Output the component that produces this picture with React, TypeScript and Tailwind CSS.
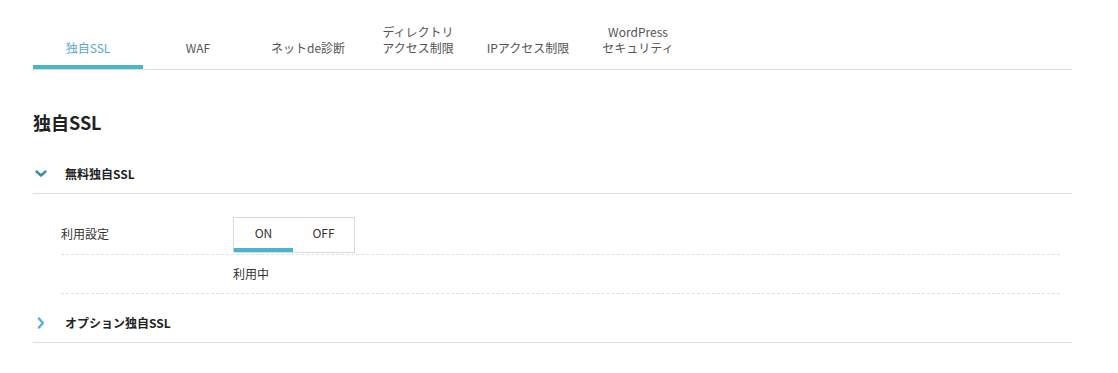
import React from "react";

const font = { fontFamily: '"Noto Sans CJK JP", "Noto Sans", sans-serif' };

const tabs: { lines: string[]; active?: boolean }[] = [
  { lines: ["独自SSL"], active: true },
  { lines: ["WAF"] },
  { lines: ["ネットde診断"] },
  { lines: ["ディレクトリ", "アクセス制限"] },
  { lines: ["IPアクセス制限"] },
  { lines: ["WordPress", "セキュリティ"] },
];

function ChevronDown() {
  return (
    <svg width="12" height="8" viewBox="0 0 12 8" className="block">
      <path d="M1.5 1.5 L6 5.5 L10.5 1.5" fill="none" stroke="#3f8aa6" strokeWidth="2.4" strokeLinecap="round" strokeLinejoin="round" />
    </svg>
  );
}

function ChevronRight() {
  return (
    <svg width="8" height="12" viewBox="0 0 8 12" className="block">
      <path d="M2 1.5 L5.8 6 L2 10.5" fill="none" stroke="#4fb1d3" strokeWidth="2.4" strokeLinecap="round" strokeLinejoin="round" />
    </svg>
  );
}

export default function App() {
  return (
    <div className="min-h-[373px] bg-white text-[#333]" style={font}>
      <div className="ml-[33px] w-[1039px]">
        {/* Tabs */}
        <div className="flex h-[70px] border-b border-[#dcdcdc]">
          {tabs.map((t, i) => (
            <div key={i} className="flex h-[69px] w-[110px] flex-col justify-end">
              <div className={`pb-[9px] text-center text-[12px] leading-[16px] ${t.active ? "text-[#5aa8c6]" : "text-[#555]"}`}>
                {t.lines.map((l, j) => (
                  <div key={j}>{l}</div>
                ))}
              </div>
              <div className={`h-[4px] ${t.active ? "bg-[#48b4cf]" : ""}`} />
            </div>
          ))}
        </div>

        {/* Title */}
        <h1 className="mt-[39px] text-[18px] font-bold leading-[27px] text-[#222]">独自SSL</h1>

        {/* Accordion 1 */}
        <div className="mt-[18px] flex h-[40px] items-center border-b border-[#dcdcdc]">
          <div className="ml-[2px] flex w-[30px] items-center">
            <ChevronDown />
          </div>
          <span className="text-[12px] font-bold text-[#222]">無料独自SSL</span>
        </div>

        <div className="ml-[28px] mr-[12px]">
          <div className="flex border-b border-dashed border-[#e0e0e0] pt-[23px] pb-[1px]">
            <div className="w-[172px] pt-[8px] text-[12px] leading-[18px] text-[#333]">利用設定</div>
            <div className="flex h-[36px] border border-[#d8d8d8] text-[12px] text-[#333]">
              <div className="flex w-[59px] flex-col">
                <div className="flex flex-1 items-center justify-center">ON</div>
                <div className="h-[4px] bg-[#48b4cf]" />
              </div>
              <div className="flex w-[61px] flex-col">
                <div className="flex flex-1 items-center justify-center">OFF</div>
                <div className="h-[4px]" />
              </div>
            </div>
          </div>
          <div className="flex h-[39px] items-center border-b border-dashed border-[#e0e0e0]">
            <div className="w-[172px]" />
            <div className="text-[12px] text-[#333]">利用中</div>
          </div>
        </div>

        {/* Accordion 2 */}
        <div className="flex items-center border-b border-[#dcdcdc] pt-[20px] pb-[10px]">
          <div className="ml-[4px] flex w-[28px] items-center">
            <ChevronRight />
          </div>
          <span className="text-[12px] font-bold leading-[18px] text-[#222]">オプション独自SSL</span>
        </div>
      </div>
    </div>
  );
}
